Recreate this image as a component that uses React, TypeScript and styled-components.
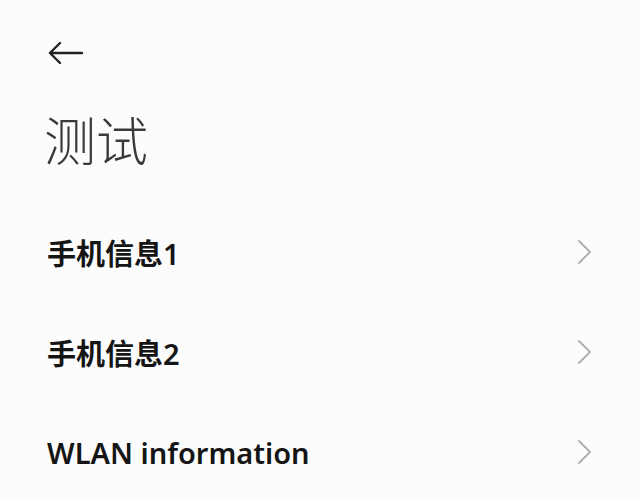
import React from "react";
import styled, { createGlobalStyle } from "styled-components";

const Global = createGlobalStyle`
  html, body { margin: 0; padding: 0; background: #fcfcfc; }
  body { font-family: "Noto Sans", "Noto Sans CJK SC", sans-serif; }
`;

const Page = styled.div`
  width: 640px;
  height: 502px;
  background: #fcfcfc;
  overflow: hidden;
  display: flex;
  flex-direction: column;
`;

const TopBar = styled.div`
  height: 106px;
  padding-left: 48px;
  display: flex;
  align-items: flex-start;
  padding-top: 41px;
  box-sizing: border-box;
`;

const BackButton = styled.button`
  border: none;
  background: none;
  padding: 0;
  width: 36px;
  height: 24px;
  display: flex;
  align-items: center;
  color: #222;
`;

const Title = styled.h1`
  margin: 0;
  padding-left: 44px;
  font-family: "Noto Sans CJK SC", sans-serif;
  font-weight: 300;
  font-size: 52px;
  line-height: 72px;
  color: #3a3a3a;
  height: 103px;
`;

const List = styled.div`
  display: flex;
  flex-direction: column;
`;

const Row = styled.div`
  height: 100px;
  display: flex;
  align-items: center;
  justify-content: space-between;
  padding: 0 46px 0 47px;
`;

const Label = styled.span`
  font-family: "Noto Sans", "Noto Sans CJK SC", sans-serif;
  font-weight: 600;
  font-size: 29px;
  color: #151515;
  letter-spacing: 0;
`;

const Chevron = () => (
  <svg width="18" height="26" viewBox="0 0 18 26">
    <path d="M3 2 L14 13 L3 24" fill="none" stroke="#b0b0b0" strokeWidth="2" strokeLinecap="round" strokeLinejoin="round" />
  </svg>
);

const items = ["手机信息1", "手机信息2", "WLAN information"];

export default function App() {
  return (
    <Page>
      <Global />
      <TopBar>
        <BackButton aria-label="back">
          <svg width="36" height="24" viewBox="0 0 36 24">
            <path d="M2 12 H34 M12 2 L2 12 L12 22" fill="none" stroke="#222" strokeWidth="2.4" strokeLinecap="round" strokeLinejoin="round" />
          </svg>
        </BackButton>
      </TopBar>
      <Title>测试</Title>
      <List>
        {items.map((t) => (
          <Row key={t}>
            <Label>{t}</Label>
            <Chevron />
          </Row>
        ))}
      </List>
    </Page>
  );
}
